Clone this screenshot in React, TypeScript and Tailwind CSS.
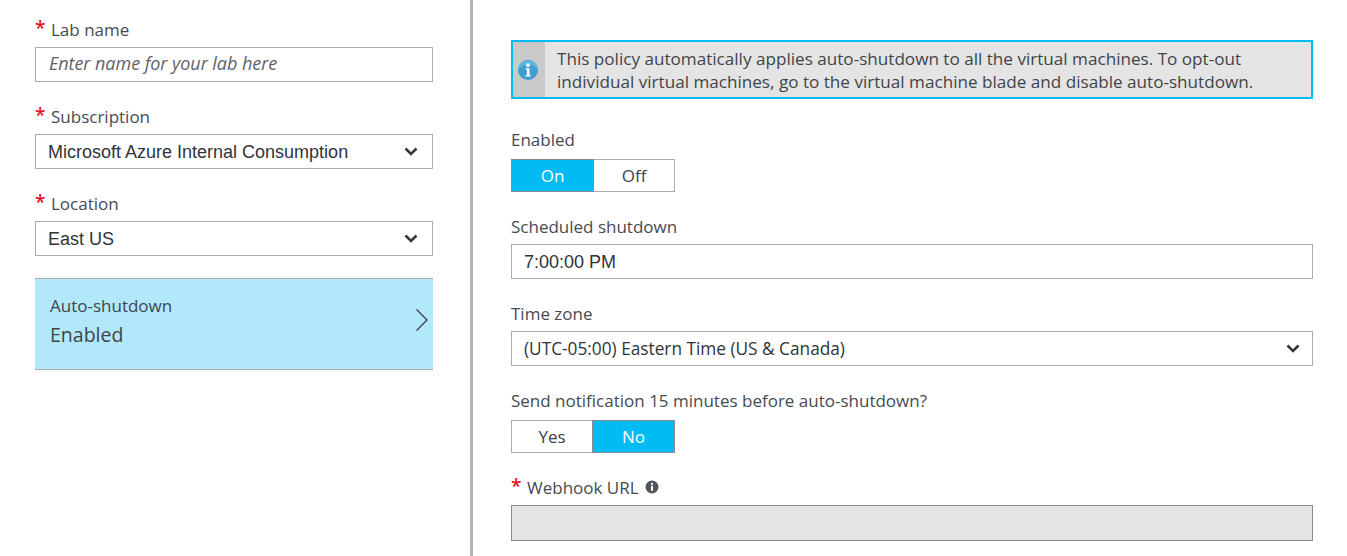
import React from "react";

const ui = "font-['Open_Sans','Noto_Sans',sans-serif]";
const arial = "font-['Liberation_Sans',Arial,sans-serif]";

function Chevron() {
  return (
    <svg width="14" height="9" viewBox="0 0 14 9" className="shrink-0">
      <path d="M1.5 1.5 L7 7 L12.5 1.5" fill="none" stroke="#32383f" strokeWidth="2.6" />
    </svg>
  );
}

function Label({ text, required, children, gap = "mb-[9px]" }: { text: string; required?: boolean; children?: React.ReactNode; gap?: string }) {
  return (
    <div className={`${gap} flex h-[17px] items-center text-[17px] leading-[17px] text-[#464b51]`}>
      {required && <span className="mr-[7px] mt-[-3px] w-[9px] text-[19px] font-semibold text-[#e81123]">*</span>}
      <span>{text}</span>
      {children}
    </div>
  );
}

function Select({ value, text = "text-[18px]", font = arial, pr = "pr-[14px]" }: { value: string; text?: string; font?: string; pr?: string }) {
  return (
    <div className={`flex h-[35px] items-center justify-between border border-[#ababab] bg-white pl-[12px] ${pr} ${font} ${text} text-[#2f343a]`}>
      <span className="mt-[1px]">{value}</span>
      <Chevron />
    </div>
  );
}

function Toggle({ left, right, active }: { left: string; right: string; active: "left" | "right" }) {
  const on = "bg-[#00bcf2] text-white border-[#8a8a8a]";
  const off = "bg-white text-[#3c4147] border-[#ababab]";
  return (
    <div className="flex h-[33px] w-[164px] text-[17px]">
      <div className={`flex items-center justify-center border ${active === "left" ? `w-[83px] ${on}` : `w-[81px] border-r-0 ${off}`}`}>{left}</div>
      <div className={`flex items-center justify-center border ${active === "right" ? `w-[83px] ${on}` : `w-[81px] border-l-0 ${off}`}`}>{right}</div>
    </div>
  );
}

export default function App() {
  return (
    <div className={`flex h-[556px] w-[1347px] overflow-hidden bg-white ${ui}`}>
      <div className="w-[470px] shrink-0 pl-[35px] pr-[37px] pt-[21px]">
        <div>
          <Label text="Lab name" required />
          <div className="flex h-[35px] items-center border border-[#ababab] pb-[2px] pl-[13px] text-[18px] italic tracking-[-0.05px] text-[#5f6368]">Enter name for your lab here</div>
        </div>
        <div className="mt-[26px]">
          <Label text="Subscription" required />
          <Select value="Microsoft Azure Internal Consumption" />
        </div>
        <div className="mt-[26px]">
          <Label text="Location" required />
          <Select value="East US" />
        </div>
        <div className="mt-[22px] flex h-[92px] items-center justify-between border-y border-[#ababab] bg-[#b1e9fa] pl-[15px] pr-[4px]">
          <div className="mb-[4px] text-[#3f444a]">
            <div className="text-[17px] leading-[22px]">Auto-shutdown</div>
            <div className="mt-[4px] text-[19.5px] leading-[28px]">Enabled</div>
          </div>
          <svg width="14" height="24" viewBox="0 0 14 24" className="mb-[8px]">
            <path d="M1.5 1.5 L12 12 L1.5 22.5" fill="none" stroke="#3a3f45" strokeWidth="1.3" />
          </svg>
        </div>
      </div>

      <div className="w-[3px] shrink-0 bg-[#b4b4b4]" />

      <div className="w-[874px] shrink-0 pl-[38px] pr-[34px] pt-[40px]">
        <div className="flex h-[59px] border-2 border-[#00bcf2] bg-[#e4e4e4]">
          <div className="flex w-[32px] shrink-0 items-center justify-center bg-[#c9c9c9] pr-[2px]">
            <svg width="20" height="20" viewBox="0 0 20 20">
              <circle cx="10" cy="10" r="10" fill="#3f9fd2" />
              <path d="M10 0 A10 10 0 0 0 0 10 A12 12 0 0 1 20 10 A10 10 0 0 0 10 0Z" fill="#5bb5dc" />
              <circle cx="10" cy="5.2" r="1.9" fill="#fff" />
              <path d="M7.6 8.2h3.9v7h1.3v1.4H7.4v-1.4h1.5V9.6H7.6z" fill="#fff" />
            </svg>
          </div>
          <div className="whitespace-nowrap pl-[12px] pt-[5px] text-[17.12px] leading-[23px] text-[#3f444a]">
            This policy automatically applies auto-shutdown to all the virtual machines. To opt-out<br />
            individual virtual machines, go to the virtual machine blade and disable auto-shutdown.
          </div>
        </div>

        <div className="mt-[32px]">
          <Label text="Enabled" gap="mb-[11px]" />
          <Toggle left="On" right="Off" active="left" />
        </div>

        <div className="mt-[26px]">
          <Label text="Scheduled shutdown" />
          <div className={`flex h-[35px] items-center border border-[#ababab] pl-[12px] text-[18px] text-[#2f343a] ${arial}`}><span className="mt-[1px]">7:00:00 PM</span></div>
        </div>

        <div className="mt-[26px]">
          <Label text="Time zone" />
          <Select value="(UTC-05:00) Eastern Time (US & Canada)" text="text-[17.25px]" font={ui} pr="pr-[12px]" />
        </div>

        <div className="mt-[26px]">
          <Label text="Send notification 15 minutes before auto-shutdown?" gap="mb-[11px]" />
          <Toggle left="Yes" right="No" active="right" />
        </div>

        <div className="mt-[26px]">
          <Label text="Webhook URL" required>
            <svg width="14" height="14" viewBox="0 0 14 14" className="ml-[6px] mt-[-1px] shrink-0">
              <circle cx="7" cy="7" r="6.5" fill="#50555b" />
              <circle cx="7" cy="3.9" r="1.1" fill="#fff" />
              <rect x="6" y="5.8" width="2" height="5" fill="#fff" />
            </svg>
          </Label>
          <div className="h-[36px] border border-[#8a8a8a] bg-[#e4e4e4]" />
        </div>
      </div>
    </div>
  );
}
